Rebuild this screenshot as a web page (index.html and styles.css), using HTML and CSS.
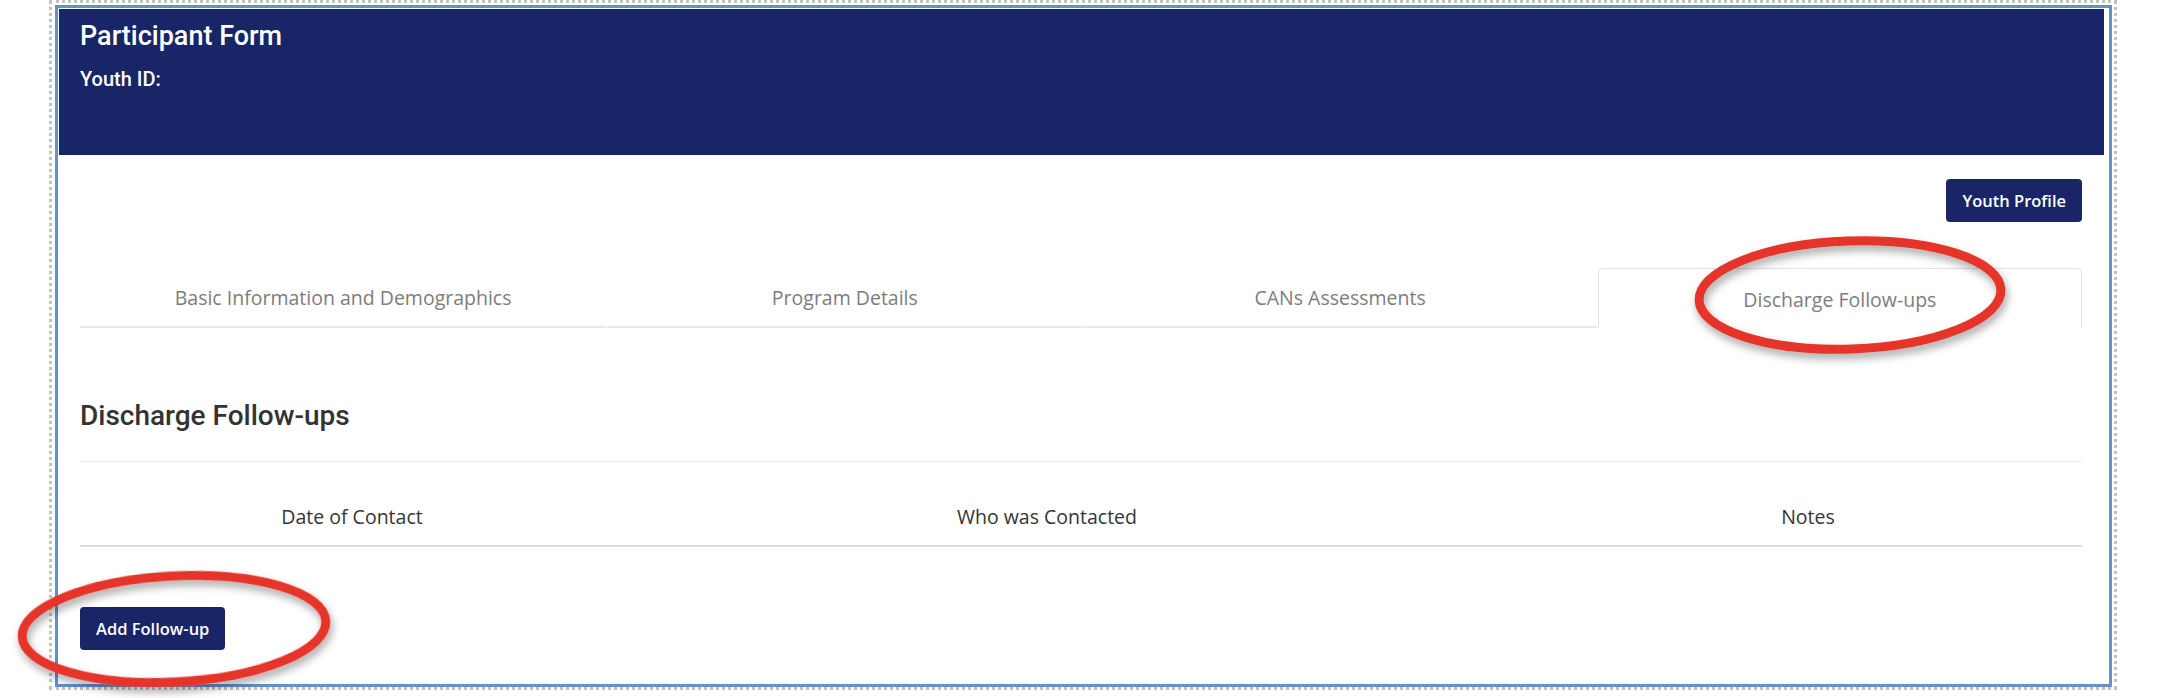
FILE: index.html
```html
<!DOCTYPE html>
<html lang="en">
<head>
<meta charset="utf-8">
<title>Participant Form</title>
<link rel="stylesheet" href="styles.css">
</head>
<body>
<div class="frame">
  <div class="panel">
    <div class="card">
      <header class="card-head">
        <h1 class="title">Participant Form</h1>
        <div class="youth-id">Youth ID:</div>
      </header>
      <div class="card-body">
        <div class="toolbar">
          <button class="btn">Youth Profile</button>
        </div>
        <nav class="tabs">
          <div class="tab">Basic Information and Demographics</div>
          <div class="tab">Program Details</div>
          <div class="tab">CANs Assessments</div>
          <div class="tab active">Discharge Follow-ups</div>
        </nav>
        <h2 class="section-title">Discharge Follow-ups</h2>
        <div class="table">
          <div class="th">Date of Contact</div>
          <div class="th">Who was Contacted</div>
          <div class="th th-notes">Notes</div>
        </div>
        <button class="btn btn-add">Add Follow-up</button>
      </div>
    </div>
  </div>
</div>
<svg class="annotations" width="2172" height="698" viewBox="0 0 2172 698" xmlns="http://www.w3.org/2000/svg">
  <defs>
    <filter id="shadow" x="-20%" y="-40%" width="140%" height="180%">
      <feDropShadow dx="2" dy="5" stdDeviation="4" flood-color="#000" flood-opacity="0.35"/>
    </filter>
  </defs>
  <g fill="none" stroke="#e5352b" stroke-width="9" filter="url(#shadow)">
    <ellipse cx="1850" cy="295" rx="151" ry="54" transform="rotate(-2 1850 295)"/>
    <ellipse cx="174" cy="629" rx="152" ry="53" transform="rotate(-3 174 629)"/>
  </g>
</svg>
</body>
</html>
```
FILE: styles.css
```css
* { box-sizing: border-box; }

html, body {
  margin: 0;
  padding: 0;
  background: #ffffff;
}

body {
  position: relative;
  width: 2172px;
  height: 698px;
  overflow: hidden;
  font-family: "Open Sans", "Liberation Sans", sans-serif;
}

.frame {
  margin-left: 49px;
  width: 2068px;
  height: 690px;
  border: 3px dotted #c2c2c2;
  padding: 2px 2px 0 3px;
}

.panel {
  height: 100%;
  border: 3px solid #6690c6;
  padding: 1px 5px 0 1px;
}

.card {
  height: 100%;
  background: #ffffff;
}

.card-head {
  height: 146px;
  background: #182566;
  color: #ffffff;
  padding: 12px 21px 0;
  font-family: Roboto, "Liberation Sans", Arial, sans-serif;
}

.title {
  margin: 0;
  font-size: 27px;
  line-height: 31px;
  font-weight: 500;
}

.youth-id {
  margin-top: 15px;
  font-size: 20px;
  line-height: 24px;
  font-weight: 500;
}

.card-body {
  padding: 24px 22px 0 21px;
}

.toolbar {
  display: flex;
  justify-content: flex-end;
}

.btn {
  height: 43px;
  padding: 0 16px;
  border: 0;
  border-radius: 4px;
  background: #1a2568;
  color: #ffffff;
  font-family: "Open Sans", sans-serif;
  font-weight: 600;
  font-size: 16.5px;
  line-height: 43px;
}

.tabs {
  margin-top: 46px;
  display: grid;
  grid-template-columns: 527fr 476fr 514fr 485fr;
  column-gap: 1px;
  height: 60px;
}

.tab {
  display: flex;
  align-items: center;
  justify-content: center;
  border-bottom: 2px solid #e8e8e8;
  color: #7d7d7d;
  font-size: 19.5px;
  line-height: 27px;
}

.tab.active {
  border: 1px solid #e2e2e2;
  border-bottom: 0;
  border-radius: 5px 5px 0 0;
  padding-top: 1px;
}

.section-title {
  margin: 72px 0 0;
  font-family: Roboto, "Liberation Sans", Arial, sans-serif;
  font-size: 28px;
  line-height: 32px;
  font-weight: 500;
  color: #333333;
}

.table {
  margin-top: 29px;
  display: grid;
  grid-template-columns: 544px 846px 1fr;
  border-top: 1px solid #ececec;
}

.th {
  padding: 41px 0 15px;
  text-align: center;
  border-bottom: 2px solid #dddddd;
  color: #353535;
  font-size: 19.5px;
  line-height: 27px;
}

.th-notes {
  padding-left: 64px;
}

.btn-add {
  margin-top: 60px;
}

.annotations {
  position: absolute;
  left: 0;
  top: 0;
  pointer-events: none;
}
```
